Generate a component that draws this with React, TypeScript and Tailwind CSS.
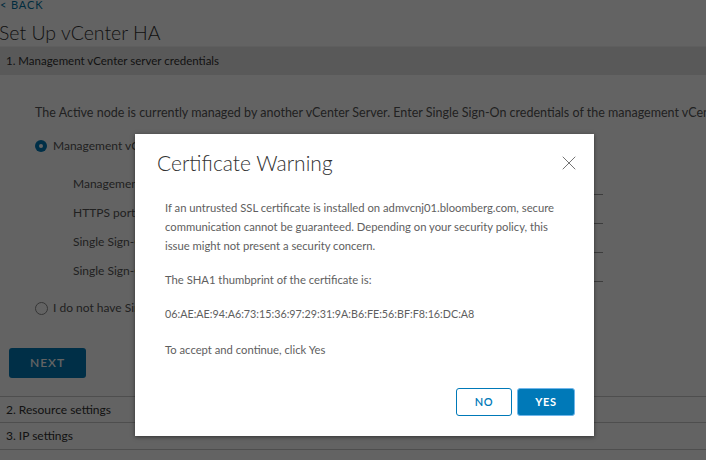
import { X } from "lucide-react";

const fields = [
  "Management vCenter server FQDN or IP address",
  "HTTPS port",
  "Single Sign-On user name",
  "Single Sign-On password",
];

function CertificateDialog() {
  return (
    <div className="absolute left-[135px] top-[134px] flex h-[302px] w-[459px] flex-col whitespace-nowrap bg-white px-[22px] pt-[15px] shadow-[0_1px_4px_rgba(0,0,0,0.5)]">
      <div className="flex items-center justify-between">
        <h2 className="text-[21px] font-light leading-[28px] text-[#313131]">Certificate Warning</h2>
        <button type="button" className="-mr-[9px] text-[#747474]">
          <X size={24} strokeWidth={1} />
        </button>
      </div>

      <div className="mt-[21px] pl-2 text-[11.25px] leading-[19px] text-[#5e5e5e]">
        <p>
          If an untrusted SSL certificate is installed on admvcnj01.bloomberg.com, secure
          <br />
          communication cannot be guaranteed. Depending on your security policy, this
          <br />
          issue might not present a security concern.
        </p>
        <p className="mt-[15px]">The SHA1 thumbprint of the certificate is:</p>
        <p className="mt-[15px] text-[10.75px]">06:AE:AE:94:A6:73:15:36:97:29:31:9A:B6:FE:56:BF:F8:16:DC:A8</p>
        <p className="mt-[17px]">To accept and continue, click Yes</p>
      </div>

      <div className="mt-auto mb-[20px] -mr-[3px] flex justify-end gap-[5px]">
        <button
          type="button"
          className="h-[28px] w-[56px] rounded-[3px] border border-[#0079b8] text-[11px] font-semibold tracking-[0.06em] text-[#0079b8]"
        >
          NO
        </button>
        <button
          type="button"
          className="h-[28px] w-[58px] rounded-[3px] border border-[#6fb6ea] bg-[#0079b8] text-[11px] font-bold tracking-[0.06em] text-white"
        >
          YES
        </button>
      </div>
    </div>
  );
}

export default function App() {
  return (
    <div className="relative h-[460px] w-[706px] overflow-hidden whitespace-nowrap bg-white font-['Lato',sans-serif] text-[#565656]">
      <div className="flex flex-col">
        <div className="-mt-[3px] h-[15px] text-[11px] leading-[15px] tracking-[0.08em] text-[#0072a3]">
          &lt; BACK
        </div>
        <h1 className="-ml-[1px] mt-[7px] text-[19.5px] font-light leading-[28px] text-[#313131]">
          Set Up vCenter HA
        </h1>
        <div className="-mt-[1px] flex h-[29px] items-center border-t border-[#f2f2f2] bg-[#e6e6e6] pl-[6px] text-[11.5px] text-[#313131]">
          1. Management vCenter server credentials
        </div>

        <p className="ml-[35px] mt-[29px] text-[12.5px] leading-[18px]">
          The Active node is currently managed by another vCenter Server. Enter Single Sign-On credentials of the management vCenter Server.
        </p>

        <div className="ml-[35px] mt-[15px] flex items-center gap-[6px] text-[12px] leading-[18px]">
          <span className="flex h-[12px] w-[12px] items-center justify-center rounded-full bg-[#0079b8]">
            <span className="h-[4px] w-[4px] rounded-full bg-white" />
          </span>
          Management vCenter server credentials
        </div>

        <div className="ml-[73px] mt-[14px] flex flex-col text-[12px]">
          {fields.map((label) => (
            <div key={label} className="flex h-[29px] items-center">
              <span className="w-[420px]">{label}</span>
              <span className="mt-[21px] h-px w-[110px] bg-[#9a9a9a]" />
            </div>
          ))}
        </div>

        <div className="ml-[35px] mt-[14px] flex items-center gap-[5px] text-[12px] leading-[18px]">
          <span className="h-[13px] w-[13px] rounded-full border border-[#8a8a8a] bg-white" />
          I do not have Single Sign-On credentials for the management vCenter Server
        </div>

        <button
          type="button"
          className="ml-[9px] mt-[31px] h-[30px] w-[77px] rounded-[3px] bg-[#0079b8] text-[12px] font-semibold tracking-[0.08em] text-white"
        >
          NEXT
        </button>

        <div className="mt-[18px] flex h-[26px] items-center border-t border-[#c8c8c8] pl-[6px] text-[12px] text-[#313131]">
          2. Resource settings
        </div>
        <div className="flex h-[27px] items-center border-t border-[#c8c8c8] pl-[6px] text-[12px] text-[#313131]">
          3. IP settings
        </div>
        <div className="border-t border-[#c8c8c8]" />
      </div>

      <div className="absolute inset-0 bg-black/[0.61]" />
      <CertificateDialog />
    </div>
  );
}
